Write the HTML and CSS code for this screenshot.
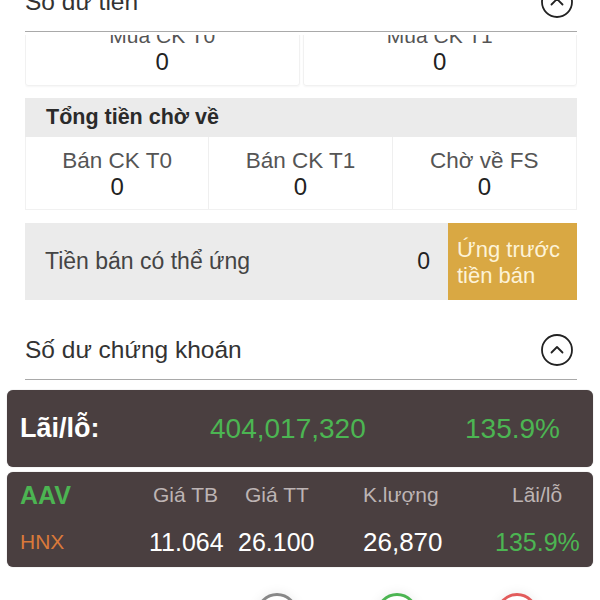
FILE: index.html
```html
<!DOCTYPE html>
<html lang="vi">
<head>
<meta charset="utf-8">
<link rel="stylesheet" href="styles.css">
</head>
<body>
<div class="screen">
  <div class="sec-head top-head">
    <span class="sec-title">Số dư tiền</span>
    <span class="toggle">
      <svg viewBox="0 0 32 32" width="32" height="32"><circle cx="16" cy="16" r="15" fill="none" stroke="#222" stroke-width="1.8"/><path d="M10.5 18.5 L16 13 L21.5 18.5" fill="none" stroke="#222" stroke-width="1.8" stroke-linecap="round" stroke-linejoin="round"/></svg>
    </span>
  </div>

  <div class="cash-clip">
    <div class="cash-pair">
      <div class="cash-card"><div class="lbl">Mua CK T0</div><div class="val">0</div></div>
      <div class="cash-card"><div class="lbl">Mua CK T1</div><div class="val">0</div></div>
    </div>
  </div>

  <div class="group">
    <div class="group-head">Tổng tiền chờ về</div>
    <div class="group-row">
      <div class="cell"><div class="lbl">Bán CK T0</div><div class="val">0</div></div>
      <div class="cell"><div class="lbl">Bán CK T1</div><div class="val">0</div></div>
      <div class="cell"><div class="lbl">Chờ về FS</div><div class="val">0</div></div>
    </div>
  </div>

  <div class="advance">
    <div class="adv-info">
      <span class="adv-label">Tiền bán có thể ứng</span>
      <span class="adv-val">0</span>
    </div>
    <div class="adv-btn">Ứng trước<br>tiền bán</div>
  </div>

  <div class="sec-head stock-head">
    <span class="sec-title">Số dư chứng khoán</span>
    <span class="toggle">
      <svg viewBox="0 0 32 32" width="32" height="32"><circle cx="16" cy="16" r="15" fill="none" stroke="#222" stroke-width="1.8"/><path d="M10.5 18.5 L16 13 L21.5 18.5" fill="none" stroke="#222" stroke-width="1.8" stroke-linecap="round" stroke-linejoin="round"/></svg>
    </span>
  </div>

  <div class="pl-card">
    <span class="pl-label">Lãi/lỗ:</span>
    <span class="pl-amount">404,017,320</span>
    <span class="pl-pct">135.9%</span>
  </div>

  <div class="stock-card">
    <div class="srow shead">
      <span class="c-sym sym">AAV</span>
      <span class="c-tb">Giá TB</span>
      <span class="c-tt">Giá TT</span>
      <span class="c-kl">K.lượng</span>
      <span class="c-pl">Lãi/lỗ</span>
    </div>
    <div class="srow sdata">
      <span class="c-sym exch">HNX</span>
      <span class="c-tb">11.064</span>
      <span class="c-tt">26.100</span>
      <span class="c-kl">26,870</span>
      <span class="c-pl green">135.9%</span>
    </div>
  </div>

  <div class="actions">
    <span class="act act-grey"></span>
    <span class="act act-green"></span>
    <span class="act act-red"></span>
  </div>
</div>
</body>
</html>
```

FILE: styles.css
```css
* { box-sizing: border-box; }
html, body { margin: 0; padding: 0; background: #fff; }
body {
  font-family: "Liberation Sans", Arial, sans-serif;
  color: #222;
  width: 600px;
  height: 600px;
  overflow: hidden;
}
.screen {
  padding: 0 7px;
}
.sec-head, .cash-clip, .group, .advance {
  margin: 0 16px 0 18px;
}
.sec-head {
  display: flex;
  align-items: center;
  justify-content: space-between;
  border-bottom: 1.5px solid #a9a9a9;
}
.top-head {
  margin-top: -25px;
  height: 57px;
  padding-bottom: 2px;
}
.sec-title {
  font-size: 24.5px;
  color: #333;
}
.toggle {
  display: flex;
  margin-right: 4px;
}
.cash-clip {
  margin-top: 3px;
  height: 57px;
  overflow: hidden;
}
.cash-pair {
  margin-top: -16px;
  display: grid;
  grid-template-columns: 1fr 1fr;
  gap: 3px;
}
.cash-card {
  height: 67px;
  padding-top: 4px;
  text-align: center;
  border: 1px solid #f1f1f1;
  border-radius: 3px;
  box-shadow: 0 1px 2px rgba(0,0,0,0.04);
}
.lbl {
  font-size: 21px;
  line-height: 24px;
  color: #555;
}
.val {
  font-size: 24px;
  line-height: 28px;
  color: #222;
}
.group {
  margin-top: 6px;
}
.group-head {
  background: #ebebeb;
  height: 39px;
  padding-left: 21px;
  font-size: 21.5px;
  font-weight: 700;
  color: #2a2a2a;
  display: flex;
  align-items: center;
}
.group-row {
  display: grid;
  grid-template-columns: 1fr 1fr 1fr;
  height: 73px;
  border: 1px solid #f1f1f1;
  border-top: none;
}
.cell {
  text-align: center;
  padding-top: 11px;
  border-right: 1px solid #efefef;
}
.cell:last-child { border-right: none; }
.cell .lbl { font-size: 22.5px; line-height: 26px; }
.cell .val { line-height: 26px; }

.advance {
  margin-top: 13px;
  height: 77px;
  display: flex;
}
.adv-info {
  flex: 1;
  background: #ebebeb;
  display: flex;
  align-items: center;
  justify-content: space-between;
  padding: 0 18px 0 20px;
}
.adv-label {
  font-size: 23px;
  color: #444;
}
.adv-val {
  font-size: 23px;
  color: #222;
}
.adv-btn {
  width: 129px;
  background: #d9a843;
  color: #fdf3d8;
  font-size: 22px;
  line-height: 26px;
  padding: 14px 0 0 9px;
}
.stock-head {
  margin-top: 0;
  height: 80px;
  padding-top: 20px;
}

.pl-card {
  margin-top: 10px;
  height: 77px;
  background: #4a3f40;
  border-radius: 6px;
  display: flex;
  align-items: center;
  padding: 0 0 0 13px;
  box-shadow: 0 0 1px rgba(0,0,0,0.4);
}
.pl-label {
  width: 190px;
  color: #fff;
  font-size: 27px;
  font-weight: 700;
}
.pl-amount {
  width: 255px;
  color: #4cb552;
  font-size: 28px;
}
.pl-pct {
  color: #4cb552;
  font-size: 28px;
}
.stock-card {
  margin-top: 5px;
  height: 95px;
  background: #4a3f40;
  border-radius: 6px;
  padding: 6px 0 0 13px;
  box-shadow: 0 0 1px rgba(0,0,0,0.4);
}
.srow {
  display: flex;
  align-items: center;
}
.shead { height: 34px; color: #bdb4b4; font-size: 21px; }
.sdata { height: 44px; margin-top: 8px; color: #fff; font-size: 25px; }
.c-sym { width: 129px; }
.c-tb { width: 89px; }
.c-tt { width: 125px; }
.c-kl { width: 132px; }
.sdata .c-kl { font-size: 26px; }
.shead .c-sym { width: 133px; }
.shead .c-tb { width: 92px; }
.shead .c-tt { width: 118px; }
.shead .c-kl { width: 149px; }
.sym { color: #4cb552; font-size: 25px; font-weight: 700; }
.exch { color: #d9793a; font-size: 21px; }
.green { color: #4cb552; }

.actions {
  margin-top: 26px;
  display: flex;
  padding-left: 249px;
  gap: 78px;
}
.act {
  width: 42px;
  height: 42px;
  border-radius: 50%;
  border: 3px solid #888;
  box-shadow: 0 0 12px rgba(0,0,0,0.08);
}
.act-green { border-color: #4cb552; }
.act-red { border-color: #e25b5b; }
```
